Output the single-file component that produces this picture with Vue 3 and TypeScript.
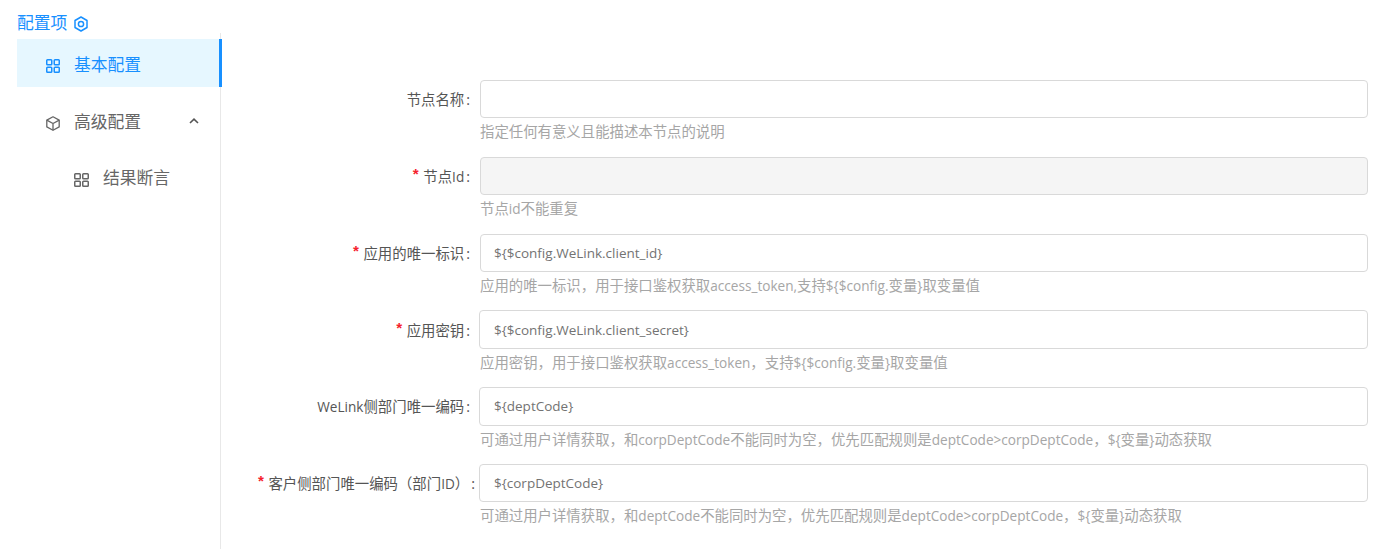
<script setup lang="ts">
interface Row {
  label: string
  required: boolean
  value: string
  help: string
  disabled?: boolean
  shift?: boolean
  wide?: boolean
}

interface Run {
  text: string
  latin: boolean
}

const rows: Row[] = [
  { label: '节点名称', required: false, value: '', help: '指定任何有意义且能描述本节点的说明' },
  { label: '节点Id', required: true, value: '', help: '节点id不能重复', disabled: true },
  {
    label: '应用的唯一标识',
    required: true,
    value: '${$config.WeLink.client_id}',
    help: '应用的唯一标识，用于接口鉴权获取access_token,支持${$config.变量}取变量值',
  },
  {
    label: '应用密钥',
    required: true,
    value: '${$config.WeLink.client_secret}',
    help: '应用密钥，用于接口鉴权获取access_token，支持${$config.变量}取变量值',
    shift: true,
  },
  {
    label: 'WeLink侧部门唯一编码',
    required: false,
    value: '${deptCode}',
    help: '可通过用户详情获取，和corpDeptCode不能同时为空，优先匹配规则是deptCode>corpDeptCode，${变量}动态获取',
    shift: true,
  },
  {
    label: '客户侧部门唯一编码（部门ID）',
    required: true,
    value: '${corpDeptCode}',
    help: '可通过用户详情获取，和deptCode不能同时为空，优先匹配规则是deptCode>corpDeptCode，${变量}动态获取',
    shift: true,
    wide: true,
  },
]

// CJK and Latin runs are sized separately, so that both keep the reference's advance widths.
function runs(text: string): Run[] {
  return (text.match(/[\u3000-\u9fff\uff00-\uffef]+|[^\u3000-\u9fff\uff00-\uffef]+/g) ?? []).map((part) => ({
    text: part,
    latin: !/[\u3000-\u9fff\uff00-\uffef]/.test(part),
  }))
}
</script>

<template>
  <div class="page">
    <aside class="side">
      <div class="title">
        <span>配置项</span>
        <svg class="title-icon" viewBox="0 0 16 16" width="16" height="16" fill="none" stroke="currentColor" stroke-width="1.5">
          <path d="M8 1 14 4.5v7L8 15 2 11.5v-7z" stroke-linejoin="round" />
          <circle cx="8" cy="8" r="2.6" />
        </svg>
      </div>
      <nav class="menu">
        <div class="item active">
          <svg class="icon" viewBox="0 0 14 14" width="14" height="14" fill="none" stroke="currentColor" stroke-width="1.5">
            <rect x="0.75" y="0.75" width="5" height="5" rx="0.8" />
            <rect x="8.25" y="0.75" width="5" height="5" rx="0.8" />
            <rect x="0.75" y="8.25" width="5" height="5" rx="0.8" />
            <rect x="8.25" y="8.25" width="5" height="5" rx="0.8" />
          </svg>
          <span>基本配置</span>
        </div>
        <div class="item parent">
          <svg class="icon" viewBox="0 0 14 15" width="14" height="15" fill="none" stroke="currentColor" stroke-width="1.3" stroke-linejoin="round">
            <path d="M7 0.8 13.2 4.1v6.8L7 14.2 0.8 10.9V4.1z" />
            <path d="M0.8 4.1 7 7.5l6.2-3.4M7 7.5v6.7" />
          </svg>
          <span>高级配置</span>
          <svg class="chevron" viewBox="0 0 10 6" width="10" height="6" fill="none" stroke="currentColor" stroke-width="1.6">
            <path d="M1 5 5 1.2 9 5" />
          </svg>
        </div>
        <div class="item child">
          <svg class="icon" viewBox="0 0 15 14" width="15" height="14" fill="none" stroke="currentColor" stroke-width="1.5">
            <rect x="0.75" y="0.75" width="5.5" height="5" rx="0.8" />
            <rect x="8.75" y="0.75" width="5.5" height="5" rx="0.8" />
            <rect x="0.75" y="8.25" width="5.5" height="5" rx="0.8" />
            <rect x="8.75" y="8.25" width="5.5" height="5" rx="0.8" />
          </svg>
          <span>结果断言</span>
        </div>
      </nav>
    </aside>

    <main class="form">
      <div v-for="row in rows" :key="row.label" class="row" :class="{ wide: row.wide }">
        <label class="label">
          <span v-if="row.required" class="star">*</span>
          <span v-for="(run, i) in runs(row.label)" :key="i" :class="{ latin: run.latin }">{{ run.text }}</span>
          <span class="colon">:</span>
        </label>
        <div class="control">
          <input
            class="input"
            :class="{ shift: row.shift }"
            type="text"
            :value="row.value"
            :disabled="row.disabled"
          />
          <div class="help">
            <span v-for="(run, i) in runs(row.help)" :key="i" :class="{ latin: run.latin }">{{ run.text }}</span>
          </div>
        </div>
      </div>
    </main>
  </div>
</template>

<style>
html,
body {
  margin: 0;
  background: #fff;
  overflow: hidden;
}
</style>

<style scoped>
.page {
  display: flex;
  height: 549px;
  font-family: "Open Sans", "Noto Sans CJK SC", sans-serif;
  background: #fff;
}

.side {
  width: 222px;
  flex: none;
  padding-left: 17px;
  box-sizing: border-box;
  display: flex;
  flex-direction: column;
}

.title {
  height: 33px;
  padding-top: 13px;
  box-sizing: border-box;
  display: flex;
  align-items: center;
  gap: 6px;
  font-size: 16.8px;
  line-height: 20px;
  color: #1890ff;
  white-space: nowrap;
}

.title-icon {
  flex: none;
  margin-top: 1px;
}

.menu {
  flex: 1;
  padding-top: 6px;
  border-right: 1px solid #e8e8e8;
  margin-right: 1px;
  font-size: 16.8px;
  color: #666;
}

.item {
  display: flex;
  align-items: center;
  height: 48px;
  padding-left: 29px;
  white-space: nowrap;
}

.item .icon {
  flex: none;
  margin-right: 14px;
  margin-top: 4px;
}

.active {
  position: relative;
  margin-right: -2px;
  padding-top: 1px;
  background: #e6f7ff;
  color: #1890ff;
  border-right: 3px solid #1890ff;
  box-sizing: border-box;
}

.active .icon {
  margin-top: 5px;
}

.parent {
  margin-top: 10px;
}

.chevron {
  margin-left: 48px;
  color: #555;
}

.child {
  margin-top: 8px;
  padding-left: 57px;
}

.child .icon {
  margin-top: 6px;
}

.form {
  flex: 1;
  min-width: 0;
  padding: 80px 30px 0 0;
  font-size: 14.4px;
}

.row {
  display: flex;
  height: 76.8px;
}

.label {
  width: 258px;
  flex: none;
  height: 38.4px;
  padding-top: 2px;
  box-sizing: border-box;
  display: flex;
  align-items: center;
  justify-content: flex-end;
  white-space: nowrap;
  color: #555;
  line-height: 20px;
}

.star {
  color: #f5222d;
  margin-right: 5px;
  font-family: "Liberation Mono", monospace;
  font-size: 15px;
  font-weight: 700;
  width: 5px;
  display: flex;
  justify-content: center;
}

.latin {
  font-size: 13.6px;
}

.colon {
  margin-left: 2px;
  margin-right: 10px;
}

.wide .colon {
  margin-right: 5px;
}

.control {
  flex: 1;
  min-width: 0;
}

.input {
  display: block;
  width: 100%;
  height: 38.4px;
  box-sizing: border-box;
  border: 1px solid #d9d9d9;
  border-radius: 4px;
  padding: 0 13px;
  background: #fff;
  color: #737373;
  font: inherit;
  font-size: 13.5px;
  outline: none;
}

.input.shift {
  width: calc(100% + 1px);
  margin-left: -1px;
  padding-left: 14px;
}

.input:disabled {
  background: #f5f5f5;
}

.help {
  margin-top: 4px;
  line-height: 20px;
  color: #a6a6a6;
  white-space: nowrap;
}
</style>
